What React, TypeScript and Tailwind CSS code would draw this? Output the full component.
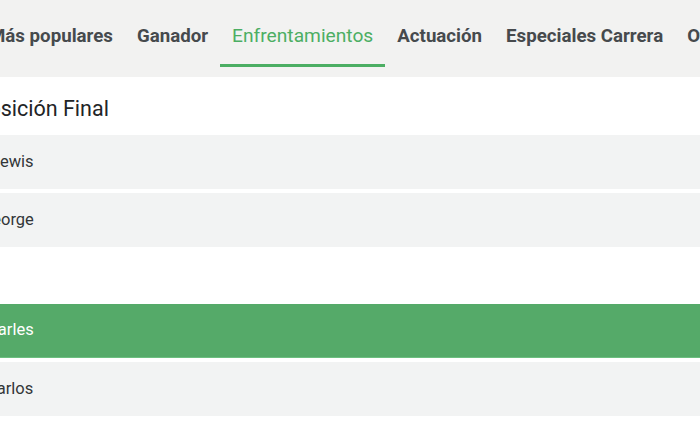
import React from 'react';

const tabs = [
  { label: 'Más populares', active: false },
  { label: 'Ganador', active: false },
  { label: 'Enfrentamientos', active: true },
  { label: 'Actuación', active: false },
  { label: 'Especiales Carrera', active: false },
  { label: 'Otros', active: false },
];

type Row = { name: string; offset: string; selected?: boolean };

const Selection: React.FC<{ row: Row }> = ({ row }) => (
  <div
    className={`h-[54px] flex items-center overflow-hidden text-[16.5px] ${
      row.selected ? 'bg-[#55aa69] text-white border-b border-[#6cbf80]' : 'bg-[#f2f3f3] text-[#333638]'
    }`}
  >
    <span className={`${row.offset} whitespace-nowrap`}>{row.name}</span>
  </div>
);

export default function App() {
  const [active, setActive] = React.useState(2);

  return (
    <div className="w-full h-[441px] overflow-hidden bg-white" style={{ fontFamily: 'Roboto, "Noto Sans", sans-serif' }}>
      {/* Tabs */}
      <div className="h-[77px] bg-[#f2f2f1] overflow-hidden">
        <nav className="flex -ml-[23px] whitespace-nowrap">
          {tabs.map((t, i) => (
            <button
              key={t.label}
              onClick={() => setActive(i)}
              className={`px-3 pt-[24px] pb-[16px] leading-[24px] border-b-[3px] ${
                i === active
                  ? 'text-[19.2px] text-[#4cae63] border-[#4cae63] font-normal'
                  : 'text-[18.7px] text-[#464a4d] border-transparent font-bold'
              }`}
            >
              {t.label}
            </button>
          ))}
        </nav>
      </div>

      {/* Posición Final */}
      <div className="h-[58px] flex items-center overflow-hidden">
        <h2 className="-ml-[25px] pt-[6px] text-[21.5px] text-[#222426] whitespace-nowrap">Posición Final</h2>
      </div>
      <div className="flex flex-col gap-[4px]">
        <Selection row={{ name: 'Lewis', offset: '-ml-[9px]' }} />
        <Selection row={{ name: 'George', offset: '-ml-[19px]' }} />
      </div>

      {/* second market */}
      <div className="h-[57px]" />
      <div className="flex flex-col gap-[4px]">
        <Selection row={{ name: 'Charles', offset: '-ml-[22px]', selected: true }} />
        <Selection row={{ name: 'Carlos', offset: '-ml-[14px]' }} />
      </div>
    </div>
  );
}
